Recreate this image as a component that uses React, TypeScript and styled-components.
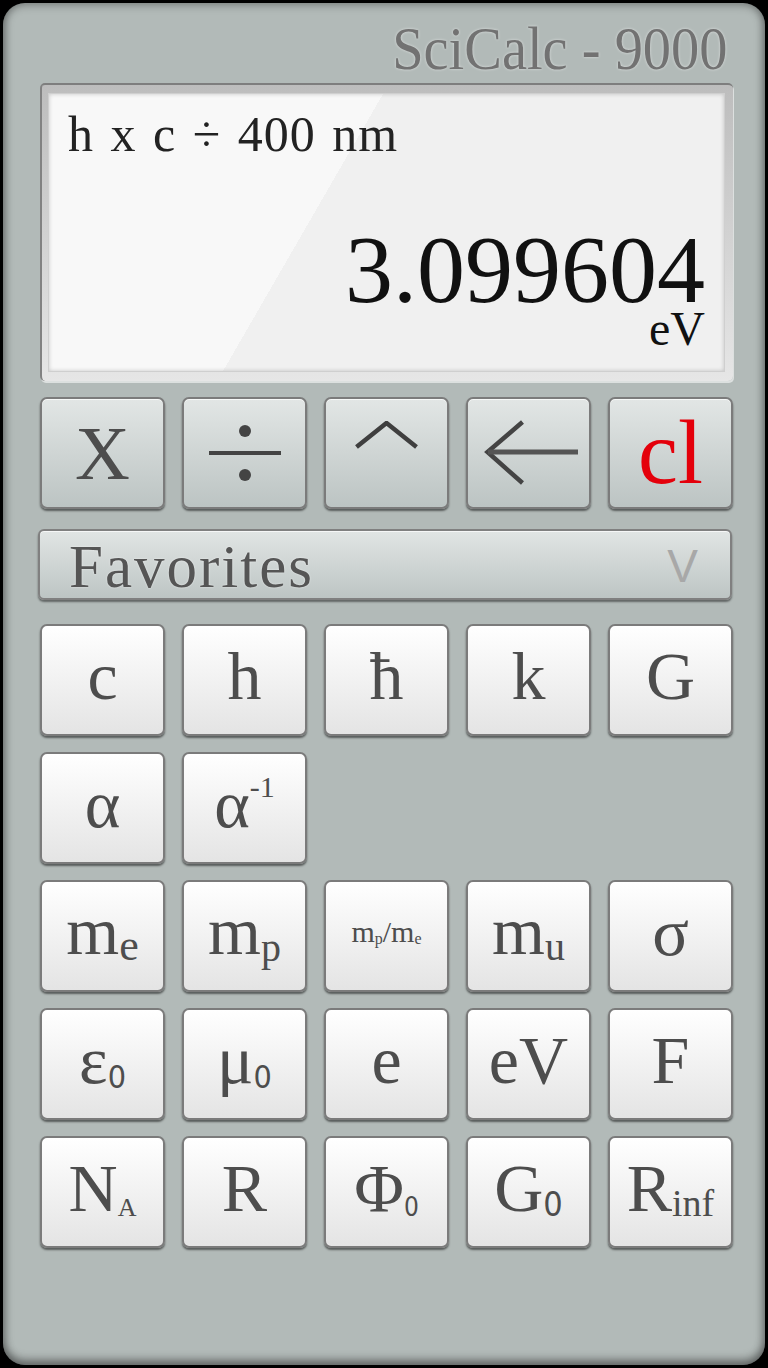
import React, {ReactNode} from 'react';
import styled, {createGlobalStyle} from 'styled-components';

const GlobalStyle = createGlobalStyle`
    html, body {
        margin: 0;
        padding: 0;
        background: #000;
    }
    body {
        font-family: 'Liberation Serif', 'Times New Roman', serif;
    }
`;

const SERIF = `'Liberation Serif', 'Times New Roman', serif`;
const NARROW = `'Liberation Sans Narrow', 'DejaVu Sans Condensed', 'Liberation Sans', sans-serif`;

const Page = styled.div`
    width: 768px;
    height: 1368px;
    box-sizing: border-box;
    padding: 3px;
    background: #000;
`;

const Body = styled.div`
    height: 100%;
    box-sizing: border-box;
    border-radius: 22px;
    background: #b2bab8;
    box-shadow: inset 0 0 8px 2px rgba(0, 0, 0, 0.35), inset 0 -6px 8px rgba(0, 0, 0, 0.25);
    padding: 16px 32px 0 37px;
    display: flex;
    flex-direction: column;

    > * {
        flex-shrink: 0;
    }
`;

const Brand = styled.div`
    text-align: right;
    padding-right: 6px;
    font-family: ${SERIF};
    font-size: 62px;
    line-height: 58px;
    color: #727272;
    text-shadow: 0 0 3px rgba(255, 255, 255, 0.6);
`;

const BrandText = styled.span`
    display: inline-block;
    transform: scaleX(0.91);
    transform-origin: right center;
`;

const DisplayFrame = styled.div`
    margin-top: 6px;
    width: 693px;
    height: 298px;
    box-sizing: border-box;
    border-radius: 5px;
    border-top: 2px solid #7e7e7e;
    border-left: 2px solid #828282;
    padding: 8px 8px 9px 6px;
    background: linear-gradient(#bdbdbd, #e6e6e6);
    box-shadow: 1px 2px 0 rgba(255, 255, 255, 0.55);
`;

const Screen = styled.div`
    height: 100%;
    box-sizing: border-box;
    border: 1px solid #cfcfcf;
    background: linear-gradient(120deg, #f8f8f8 40%, #f0f0f0 40%);
    box-shadow: inset 0 0 4px rgba(0, 0, 0, 0.2);
    padding: 10px 19px 22px 19px;
    display: flex;
    flex-direction: column;
    color: #111;
    font-family: ${SERIF};
`;

const Expression = styled.div`
    font-size: 50px;
    line-height: 60px;
    letter-spacing: 1px;
    word-spacing: 3px;
    color: #222;
`;

const Result = styled.div`
    margin-top: auto;
    text-align: right;
    font-size: 96px;
    line-height: 78px;
`;

const Unit = styled.div`
    text-align: right;
    font-size: 48px;
    line-height: 40px;
`;

const KeyRow = styled.div`
    margin-top: 16px;
    display: grid;
    grid-template-columns: repeat(5, 125px);
    column-gap: 17px;
`;

const KeyGrid = styled.div`
    margin-top: 24px;
    display: grid;
    grid-template-columns: repeat(5, 125px);
    grid-auto-rows: 112px;
    gap: 16px 17px;
`;

const Key = styled.button<{$tone?: 'grey' | 'white'; $lift?: number; $newRow?: boolean}>`
    height: 112px;
    box-sizing: border-box;
    border: 2px solid #7b7b7b;
    border-radius: 7px;
    padding: 0 0 ${p => p.$lift ?? 0}px;
    margin: 0;
    grid-column-start: ${p => (p.$newRow ? 1 : 'auto')};
    background: ${p =>
        p.$tone === 'grey' ? 'linear-gradient(#e2e6e5, #bcc4c3)' : 'linear-gradient(#ffffff, #e4e4e4)'};
    box-shadow: 0 2px 2px rgba(0, 0, 0, 0.5), inset 0 1px 0 rgba(255, 255, 255, 0.7);
    display: flex;
    align-items: center;
    justify-content: center;
    font-family: ${SERIF};
    color: #4d4d4d;
    cursor: pointer;
`;

const Sym = styled.span<{$size?: number; $color?: string}>`
    font-size: ${p => p.$size ?? 68}px;
    line-height: 1;
    white-space: nowrap;
    color: ${p => p.$color ?? 'inherit'};
`;

const Sub = styled.span<{$size: number; $drop?: number; $sans?: boolean}>`
    font-size: ${p => p.$size}px;
    vertical-align: -${p => p.$drop ?? 6}px;
    font-family: ${p => (p.$sans ? NARROW : 'inherit')};
`;

const Sup = styled.span<{$size: number; $rise: number}>`
    font-size: ${p => p.$size}px;
    vertical-align: ${p => p.$rise}px;
`;

const Favorites = styled.div`
    margin-top: 20px;
    margin-left: -2px;
    width: 694px;
    height: 71px;
    box-sizing: border-box;
    border: 2px solid #808080;
    border-radius: 6px;
    background: linear-gradient(#e1e5e4, #bdc5c4);
    box-shadow: 0 2px 2px rgba(0, 0, 0, 0.45), inset 0 1px 0 rgba(255, 255, 255, 0.7);
    display: flex;
    align-items: center;
    justify-content: space-between;
    padding: 3px 32px 0 29px;
`;

const FavLabel = styled.span`
    font-family: ${SERIF};
    font-size: 61px;
    line-height: 1;
    letter-spacing: 2px;
    color: #555;
    text-shadow: 0 0 2px rgba(255, 255, 255, 0.7);
`;

const FavCaret = styled.span`
    font-family: 'Liberation Sans', Arial, sans-serif;
    font-size: 46px;
    line-height: 1;
    color: #a8a8a8;
`;

const DivideIcon = () => (
    <svg width="80" height="58" viewBox="0 0 80 58">
        <circle cx="40" cy="7" r="6" fill="#444" />
        <line x1="4" y1="29" x2="76" y2="29" stroke="#444" strokeWidth="4" />
        <circle cx="40" cy="51" r="6" fill="#444" />
    </svg>
);

const CaretIcon = () => (
    <svg width="65" height="64" viewBox="0 0 65 64">
        <polyline points="2.5,26 32.5,2 62.5,26" fill="none" stroke="#3f3f3f" strokeWidth="4.5" />
    </svg>
);

const BackIcon = () => (
    <svg width="100" height="66" viewBox="0 0 100 66">
        <polyline points="43.5,2 8.5,32 43.5,63" fill="none" stroke="#444" strokeWidth="4.5" />
        <line x1="9" y1="32" x2="99" y2="32" stroke="#555" strokeWidth="5" />
    </svg>
);

type Constant = {label: ReactNode; newRow?: boolean};

const constants: Constant[] = [
    {label: <Sym>c</Sym>},
    {label: <Sym>h</Sym>},
    {label: <Sym>ħ</Sym>},
    {label: <Sym>k</Sym>},
    {label: <Sym>G</Sym>},
    {label: <Sym>α</Sym>},
    {label: <Sym>α<Sup $size={30} $rise={30}>-1</Sup></Sym>},
    {label: <Sym>m<Sub $size={44}>e</Sub></Sym>, newRow: true},
    {label: <Sym>m<Sub $size={40} $drop={7}>p</Sub></Sym>},
    {
        label: (
            <Sym $size={30}>
                m<Sub $size={16} $drop={2}>p</Sub>/m<Sub $size={16} $drop={2}>e</Sub>
            </Sym>
        ),
    },
    {label: <Sym>m<Sub $size={40}>u</Sub></Sym>},
    {label: <Sym>σ</Sym>},
    {label: <Sym>ε<Sub $size={32} $drop={5} $sans>0</Sub></Sym>},
    {label: <Sym>μ<Sub $size={32} $drop={5} $sans>0</Sub></Sym>},
    {label: <Sym>e</Sym>},
    {label: <Sym>eV</Sym>},
    {label: <Sym>F</Sym>},
    {label: <Sym>N<Sub $size={26} $drop={5}>A</Sub></Sym>},
    {label: <Sym>R</Sym>},
    {label: <Sym>Φ<Sub $size={26} $drop={5} $sans>0</Sub></Sym>},
    {label: <Sym>G<Sub $size={34} $drop={5} $sans>0</Sub></Sym>},
    {label: <Sym>R<Sub $size={38} $drop={5}>inf</Sub></Sym>},
];

export default function App() {
    return (
        <Page>
            <GlobalStyle />
            <Body>
                <Brand>
                    <BrandText>SciCalc - 9000</BrandText>
                </Brand>
                <DisplayFrame>
                    <Screen>
                        <Expression>h x c ÷ 400 nm</Expression>
                        <Result>3.099604</Result>
                        <Unit>eV</Unit>
                    </Screen>
                </DisplayFrame>

                <KeyRow>
                    <Key $tone="grey">
                        <Sym $size={76}>X</Sym>
                    </Key>
                    <Key $tone="grey">
                        <DivideIcon />
                    </Key>
                    <Key $tone="grey">
                        <CaretIcon />
                    </Key>
                    <Key $tone="grey">
                        <BackIcon />
                    </Key>
                    <Key $tone="grey">
                        <Sym $size={90} $color="#e4000b">cl</Sym>
                    </Key>
                </KeyRow>

                <Favorites>
                    <FavLabel>Favorites</FavLabel>
                    <FavCaret>V</FavCaret>
                </Favorites>

                <KeyGrid>
                    {constants.map((c, i) => (
                        <Key key={i} $tone="white" $lift={8} $newRow={c.newRow}>
                            {c.label}
                        </Key>
                    ))}
                </KeyGrid>
            </Body>
        </Page>
    );
}
